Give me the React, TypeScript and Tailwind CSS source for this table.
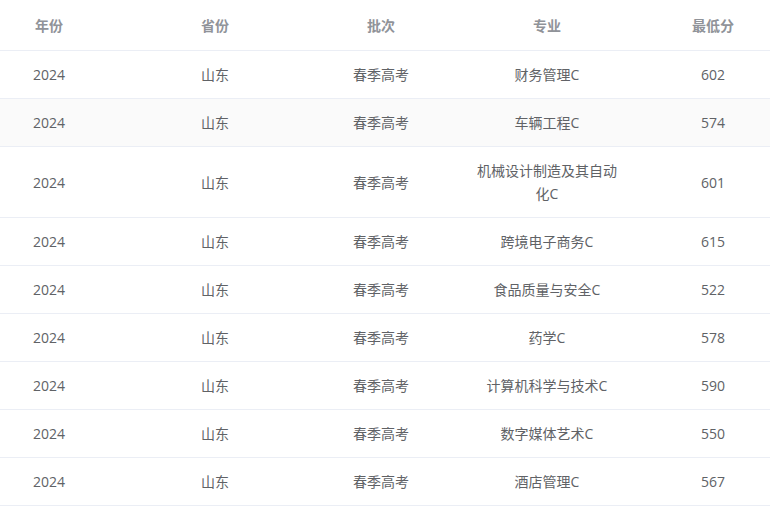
import React from "react";

const rows: [string, string, string, string, string][] = [
  ["2024", "山东", "春季高考", "财务管理C", "602"],
  ["2024", "山东", "春季高考", "车辆工程C", "574"],
  ["2024", "山东", "春季高考", "机械设计制造及其自动化C", "601"],
  ["2024", "山东", "春季高考", "跨境电子商务C", "615"],
  ["2024", "山东", "春季高考", "食品质量与安全C", "522"],
  ["2024", "山东", "春季高考", "药学C", "578"],
  ["2024", "山东", "春季高考", "计算机科学与技术C", "590"],
  ["2024", "山东", "春季高考", "数字媒体艺术C", "550"],
  ["2024", "山东", "春季高考", "酒店管理C", "567"],
];

const headers = ["年份", "省份", "批次", "专业", "最低分"];

export default function App() {
  return (
    <div
      className="w-[770px] h-[517px] overflow-hidden bg-white"
      style={{ fontFamily: '"Open Sans", "Noto Sans CJK SC", sans-serif' }}
    >
      <div className="ml-[-34px] w-[830px]">
        <div className="grid grid-cols-[repeat(5,166px)] h-[51px] border-b border-[#ebeef5] items-center">
          {headers.map((h) => (
            <div
              key={h}
              className="px-[10px] text-center text-[14px] leading-[23px] font-bold text-[#909399]"
            >
              {h}
            </div>
          ))}
        </div>
        {rows.map((r, i) => (
          <div
            key={i}
            className={`grid grid-cols-[repeat(5,166px)] border-b border-[#ebeef5] items-center ${
              i === 1 ? "bg-[#fafafa]" : "bg-white"
            }`}
          >
            {r.map((c, j) => (
              <div
                key={j}
                className="px-[10px] py-[12px] text-center text-[14px] leading-[23px] text-[#606266]"
              >
                {c}
              </div>
            ))}
          </div>
        ))}
      </div>
    </div>
  );
}
